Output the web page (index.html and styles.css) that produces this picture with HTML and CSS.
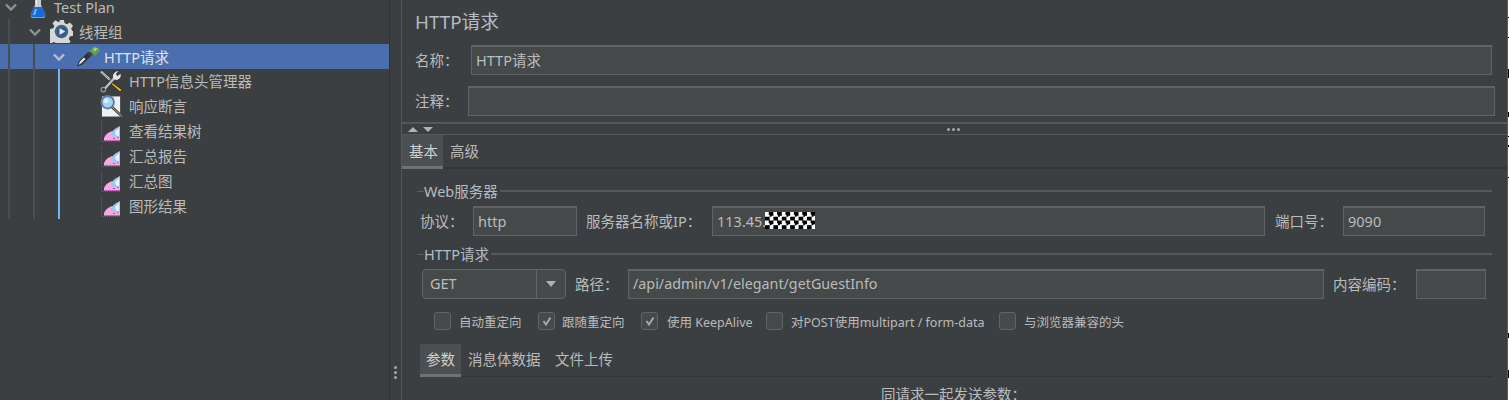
FILE: index.html
```html
<!DOCTYPE html>
<html lang="zh">
<head>
<meta charset="utf-8">
<title>HTTP请求</title>
<link rel="stylesheet" href="styles.css">
</head>
<body>
<div class="app">
  <aside class="tree">
    <i class="guide g1"></i><i class="guide g2"></i><i class="guide g3"></i>
    <div class="row lv0">
      <svg class="chev" viewBox="0 0 12 8"><path d="M1 1.500 6 6.500l5-5" /></svg>
      <svg class="ico flask" viewBox="0 0 16 20"><path d="M5 0h6v7l4 9q1 4-3 4H4q-4 0-3-4l4-9z" fill="#c9ccd0"/><path d="M3.800 9h8.400l2.800 7q.6 3.500-3 3.500H4q-3.600 0-3-3.500z" fill="#1a6bd6"/><path d="M5 11h2l-2 6H3z" fill="#7fb6ee"/><path d="M6 1h1v6H6z" fill="#f2f3f4"/></svg>
      <span>Test Plan</span>
    </div>
    <div class="row lv1">
      <svg class="chev" viewBox="0 0 12 8"><path d="M1 1.500 6 6.500l5-5" /></svg>
      <svg class="ico gear" viewBox="0 0 24 24"><path d="M9.500 0h5l.8 3.500 2.400 1 3-1.900 3.300 3.300-1.900 3 1 2.400 1 .2v5l-3.500.8-1 2.400 1.900 3-3.300 3-3-1.700-2.400 1-.8 2.500h-5l-.8-3.500-2.400-1-3 1.900-3-3 1.700-3-1-2.400L0 14.500v-5l3.500-.8 1-2.400-1.900-3 3-3 3 1.900 2.400-1z" fill="#d5d7d9"/><circle cx="12" cy="12" r="7" fill="#46607c"/><circle cx="12" cy="12" r="5" fill="#2c5d96"/><path d="M10 8.500 16 12l-6 3.500z" fill="#e8eef5"/></svg>
      <span>线程组</span>
    </div>
    <div class="row lv2 selected">
      <svg class="chev" viewBox="0 0 12 8"><path d="M1 1.500 6 6.500l5-5" /></svg>
      <svg class="ico pipette" viewBox="0 0 24 21"><path d="M1 20.500 3 15 12 6l3.500 3.500-9 9z" fill="#2e3032"/><path d="M2.500 19 4 15.500l4-4 1.500 1.500-4 4z" fill="#e6e8ea"/><path d="M11 8 14 11 17 8 14 5z" fill="#3a3d40"/><path d="M13 5 18 .5l5 1.500 1 3-5 5z" fill="#5d9c53"/><path d="M18 1.500l4 1-3 3-2-1z" fill="#9ccf90"/></svg>
      <span>HTTP请求</span>
    </div>
    <div class="row lv3">
      <svg class="ico tools" viewBox="0 0 24 23"><path d="M1 1 13 12" stroke="#d8d8d8" stroke-width="2.200" fill="none"/><path d="M1 1 13 12" stroke="#555" stroke-width=".6" fill="none"/><path d="M12 12l11 8-2 2.500-10-9z" fill="#e8b51e" stroke="#222" stroke-width=".8"/><path d="M4 20 15 8" stroke="#2c2c2c" stroke-width="4.500" fill="none"/><path d="M4 20 15 8" stroke="#bdbdbd" stroke-width="2.500" fill="none"/><path d="M14 9q-2-5 3-8l2.500-.5-3 3 1.500 2.500 3.500-2.500q1 5-4 6.500z" fill="#e8e8e8"/><circle cx="3.500" cy="20" r="2.500" fill="#444" stroke="#bbb"/></svg>
      <span>HTTP信息头管理器</span>
    </div>
    <div class="row lv3">
      <svg class="ico loupe" viewBox="0 0 24 23"><path d="M2 1h19v21H2z" fill="#eef0f2"/><circle cx="8" cy="7" r="6.500" fill="#a4d2f4" stroke="#5b7fa3" stroke-width="2"/><circle cx="6.500" cy="5.500" r="2.500" fill="#dcf0fc"/><path d="M12.500 12 23 22" stroke="#444" stroke-width="2.800"/><path d="M12.500 12 23 22" stroke="#c4c4c4" stroke-width=".8"/></svg>
      <span>响应断言</span>
    </div>
    <div class="row lv3">
      <svg class="ico graph" viewBox="0 0 20 21"><use href="#graph-icon"/></svg>
      <span>查看结果树</span>
    </div>
    <div class="row lv3">
      <svg class="ico graph" viewBox="0 0 20 21"><use href="#graph-icon"/></svg>
      <span>汇总报告</span>
    </div>
    <div class="row lv3">
      <svg class="ico graph" viewBox="0 0 20 21"><use href="#graph-icon"/></svg>
      <span>汇总图</span>
    </div>
    <div class="row lv3">
      <svg class="ico graph" viewBox="0 0 20 21"><use href="#graph-icon"/></svg>
      <span>图形结果</span>
    </div>
  </aside>

  <div class="splitter">
    <span class="vdots"><b></b><b></b><b></b></span>
  </div>

  <main class="panel">
    <h1 class="title">HTTP请求</h1>
    <div class="form-row name-row">
      <label class="lbl w-name">名称：</label>
      <div class="field grow">HTTP请求</div>
    </div>
    <div class="form-row comment-row">
      <label class="lbl w-comment">注释：</label>
      <div class="field grow"></div>
    </div>
    <div class="split-bar">
      <span class="tri up"></span><span class="tri down"></span>
      <span class="hdots"><b></b><b></b><b></b></span>
    </div>
    <nav class="tabs top-tabs">
      <span class="tab active">基本</span>
      <span class="tab">高级</span>
    </nav>

    <section class="group web-group">
      <div class="legend"><span>Web服务器</span></div>
      <div class="form-row server-row">
        <label class="lbl w-proto">协议：</label>
        <div class="field w-http">http</div>
        <label class="lbl w-host">服务器名称或IP：</label>
        <div class="field grow host-val">113.45.<span class="mask"></span></div>
        <label class="lbl w-port">端口号：</label>
        <div class="field w-portv">9090</div>
      </div>
    </section>

    <section class="group http-group">
      <div class="legend"><span>HTTP请求</span></div>
      <div class="form-row path-row">
        <div class="select">
          <span class="sel-val">GET</span>
          <span class="sel-btn"><i></i></span>
        </div>
        <label class="lbl w-path">路径：</label>
        <div class="field grow path-val">/api/admin/v1/elegant/getGuestInfo</div>
        <label class="lbl w-enc">内容编码：</label>
        <div class="field w-encv"></div>
      </div>
      <div class="checks">
        <span class="check c1"><i class="box"></i>自动重定向</span>
        <span class="check c2"><i class="box"><svg viewBox="0 0 12 12"><path d="M2.500 6 5 9.500 9.500 2.500"/></svg></i>跟随重定向</span>
        <span class="check c3"><i class="box"><svg viewBox="0 0 12 12"><path d="M2.500 6 5 9.500 9.500 2.500"/></svg></i>使用 KeepAlive</span>
        <span class="check c4"><i class="box"></i>对POST使用multipart / form-data</span>
        <span class="check c5"><i class="box"></i>与浏览器兼容的头</span>
      </div>
    </section>

    <nav class="tabs sub-tabs">
      <span class="tab active">参数</span>
      <span class="tab">消息体数据</span>
      <span class="tab">文件上传</span>
    </nav>
    <p class="params-title">同请求一起发送参数：</p>
  </main>
  <div class="edge"></div>
</div>
<svg class="defs" width="0" height="0">
  <symbol id="graph-icon" viewBox="0 0 20 21">
    <path d="M.5 0v20.500H20" fill="none" stroke="#606366" stroke-dasharray="1 1"/>
    <path d="M3 20v-3q1-3 4-5l4-2 4 3 4 3v4z" fill="#f4a9e4"/>
    <path d="M3 19h16v1H3z" fill="#c65fc0"/>
    <path d="M12 17h2v1h-2zM16 16h2v1h-2z" fill="#b44fb0"/>
    <path d="M10 14q0-5 9-9v11l-2 .5-2-1-2 1z" fill="#9fc6ee"/>
    <path d="M14 11l4-4v8l-3-.5z" fill="#e8f2fb"/>
  </symbol>
</svg>
</body>
</html>
```
FILE: styles.css
```css
* { box-sizing: border-box; }
html, body { margin: 0; padding: 0; height: 400px; overflow: hidden; background: #3c3f41; }
body, .field, .lbl {
  font-family: "Noto Sans", "Noto Sans CJK SC", sans-serif;
  color: #bbbbbb;
}
.app { display: flex; height: 400px; overflow: hidden; }

/* tree */
.tree { position: relative; width: 390px; flex: none; margin-top: -6px; height: 406px; border-right: 1px solid #323232; font-size: 14.5px; }
.guide { position: absolute; width: 2px; background: #4b4d4f; z-index: 1; }
.g1 { left: 8px; top: 25px; height: 200px; }
.g2 { left: 33px; top: 50px; height: 175px; }
.g3 { left: 58px; top: 75px; height: 150px; background: #6eb6f5; }
.row { display: flex; align-items: center; height: 25px; white-space: nowrap; position: relative; }
.row span { line-height: 25px; padding-top: 2px; }
.lv3 span { padding-top: 0; }
.selected { background: #4b6eaf; color: #dfe3ea; }
.selected .chev path { stroke: #b9c0cc; }
.lv0 { padding-left: 5px; }
.lv1 { padding-left: 29px; }
.lv2 { padding-left: 53px; }
.lv3 { padding-left: 100px; }
.chev { width: 12px; height: 8px; flex: none; position: relative; z-index: 2; }
.chev path { fill: none; stroke: #8f9193; stroke-width: 2.400; }
.ico { flex: none; display: block; }
.flask { width: 16px; height: 20px; margin-left: 13px; margin-right: 8px; margin-top: 2px; }
.gear { width: 23px; height: 23px; margin-left: 9px; margin-right: 6px; }
.pipette { width: 24px; height: 21px; margin-left: 11px; margin-right: 4px; }
.tools, .loupe { width: 23px; height: 23px; margin-right: 6px; }
.graph { width: 20px; height: 21px; margin-left: 1px; margin-right: 8px; }

/* splitter */
.splitter { width: 12px; flex: none; border-right: 1px solid #555759; display: flex; align-items: flex-end; justify-content: center; padding-bottom: 21px; }
.vdots { display: flex; flex-direction: column; gap: 2px; margin-right: 1px; }
.vdots b { width: 3px; height: 3px; border-radius: 50%; background: #a8a8a8; }

/* right panel */
.panel { flex: 1; min-width: 0; font-size: 14.5px; }
.title { margin: 0; padding: 10px 0 0 13px; height: 45px; font-size: 18.8px; line-height: 25px; font-weight: 400; color: #b4bcc4; }
.form-row { display: flex; align-items: center; height: 30px; }
.lbl { flex: none; white-space: nowrap; font-size: 14.5px; padding-bottom: 1px; }
.field {
  height: 30px; padding: 0 4px 2px; border: 1px solid #616365; border-width: 2px 1px 1px 1.500px;
  background: #45494a; font-size: 14.500px; line-height: 24px; white-space: nowrap; overflow: hidden;
  display: flex; align-items: center; min-width: 0;
}
.grow { flex: 1; }
.name-row { padding: 0 15px 0 13px; }
.w-name { width: 56px; }
.comment-row { margin-top: 11px; padding: 0 12px 0 13px; }
.w-comment { width: 53px; }
.split-bar { margin-top: 6px; height: 13px; border-top: 2px solid #555759; border-bottom: 1px solid #555759; display: flex; align-items: center; padding-left: 6px; }
.tri { width: 0; height: 0; border-left: 5px solid transparent; border-right: 5px solid transparent; margin-right: 5px; }
.up { border-bottom: 5px solid #b0b2b4; }
.down { border-top: 5px solid #b0b2b4; }
.hdots { display: flex; gap: 2px; margin-left: 509px; }
.hdots b { width: 3px; height: 3px; border-radius: 50%; background: #a8a8a8; }

.tabs { display: flex; font-size: 14.500px; }
.tab { display: block; white-space: nowrap; }
.tab.active { background: #4b4f51; border-bottom: 3px solid #6f7173; color: #d0d0d0; }
.top-tabs { height: 34px; border-bottom: 2px solid #323537; }
.top-tabs .tab { padding: 0 7px; width: 41px; line-height: 32px; height: 34px; }

.legend { display: flex; align-items: center; height: 20px; padding-left: 15px; margin-right: 15px; font-size: 14.500px; color: #b4bcc4; }
.legend span { padding-bottom: 1px; }
.legend::before { content: ""; width: 7px; border-top: 1px solid #5b5d5f; flex: none; }
.legend::after { content: ""; flex: 1; border-top: 2px solid #565859; margin-left: 2px; }
.web-group { margin-top: 12px; }
.server-row { margin-top: 5px; padding: 0 22px 0 18px; }
.w-proto { width: 53px; }
.w-http { width: 104px; flex: none; }
.w-host { width: 126px; margin-left: 9px; }
.w-port { width: 68px; margin-left: 10px; }
.w-portv { width: 142px; flex: none; }
.host-val { padding-left: 4px; }
.mask { display: inline-block; flex: none; width: 50px; height: 17px; margin-left: -1px; background: repeating-conic-gradient(#000 0 25%, #fff 0 50%) 0 0 / 8.400px 8.500px; }

.http-group { margin-top: 8px; }
.path-row { margin-top: 5px; padding: 0 21px 0 20px; }
.select { width: 144px; height: 30px; flex: none; display: flex; border: 1px solid #636567; border-radius: 4px; background: #45494a; }
.sel-val { flex: 1; padding-left: 7px; line-height: 27px; }
.sel-btn { width: 29px; border-left: 1px solid #636567; display: flex; align-items: center; justify-content: center; }
.sel-btn i { width: 0; height: 0; border-left: 5px solid transparent; border-right: 5px solid transparent; border-top: 6px solid #b0b2b4; }
.w-path { width: 53px; margin-left: 9px; }
.path-val { font-size: 14.300px; }
.w-enc { width: 83px; margin-left: 9px; }
.w-encv { width: 70px; flex: none; }

.checks { display: flex; height: 18px; margin-top: 13px; padding-left: 32px; font-size: 12.500px; align-items: center; }
.check { display: flex; align-items: center; white-space: nowrap; color: #bbbbbb; }
.box { flex: none; width: 17px; height: 18px; margin-right: 8px; border: 1px solid #616365; border-radius: 3px; background: #45494a; display: flex; align-items: center; justify-content: center; }
.box svg { width: 12px; height: 12px; }
.box path { fill: none; stroke: #a6a8aa; stroke-width: 2; }
.c1 { width: 104px; }
.c2 { width: 103px; }
.c2 .box { margin-right: 7px; }
.c3 { width: 125px; }
.c3 .box { margin-right: 9px; }
.c4 { width: 233px; }

.sub-tabs { margin: 14px 15px 0 18px; height: 33px; border-bottom: 1px solid #323537; }
.sub-tabs .tab { line-height: 31px; height: 33px; }
.sub-tabs .tab.active { width: 41px; padding: 0 6px; margin-right: 7px; }
.sub-tabs .tab:nth-child(2) { width: 87px; }
.params-title { margin: 9px 0 0; text-align: center; font-size: 14.500px; line-height: 16px; width: 1103px; }

.edge {
  width: 2px; flex: none; border-left: 1px solid #5a5c5e; background-color: #fff;
  background-repeat: no-repeat;
  background-image:
    linear-gradient(#000, #000), linear-gradient(#000, #000), linear-gradient(#000, #000),
    linear-gradient(#000, #000), linear-gradient(#000, #000), linear-gradient(#000, #000),
    linear-gradient(#000, #000), linear-gradient(#000, #000), linear-gradient(#000, #000);
  background-size: 1px 1px, 1px 1px, 1px 9px, 1px 5px, 1px 1px, 1px 2px, 1px 1px, 1px 5px, 1px 8px;
  background-position: 0 17px, 0 37px, 0 69px, 0 112px, 0 136px, 0 145px, 0 177px, 0 333px, 0 370px;
}
.defs { position: absolute; }
```
